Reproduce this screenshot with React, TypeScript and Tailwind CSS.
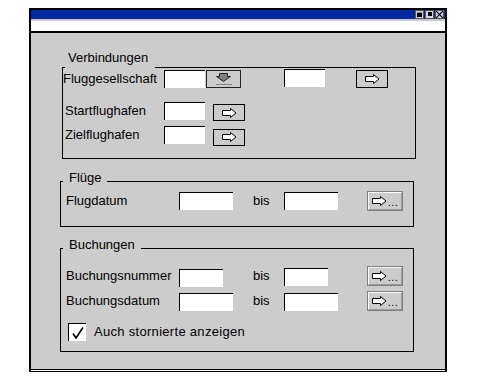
import React from "react";

function HollowArrow() {
  return (
    <svg width="15" height="10" viewBox="0 0 15 10">
      <path
        d="M0.5 2.5H8.5V0.5L14 5L8.5 9.5V7.5H0.5Z"
        fill="white"
        stroke="black"
      />
    </svg>
  );
}

function ArrowButton({ w = "w-[32px]", h = "h-[18px]" }: { w?: string; h?: string }) {
  return (
    <div
      className={`${w} ${h} shrink-0 flex items-center justify-center border border-black bg-[#cccccc]`}
    >
      <HollowArrow />
    </div>
  );
}

function MoreButton() {
  return (
    <div className="w-[36px] h-[20px] shrink-0 flex border border-[#808080] bg-[#cccccc]">
      <div className="flex-1 flex items-center justify-center gap-[1px] border-t border-l border-white border-r border-b border-r-[#999999] border-b-[#999999]">
        <HollowArrow />
        <span className="text-[11px] leading-none mt-[3px] tracking-[0.5px]">...</span>
      </div>
    </div>
  );
}

function DropButton() {
  return (
    <div className="w-[35px] h-[18px] shrink-0 flex items-center justify-center border border-[#222222] bg-[#cccccc]">
      <svg width="18" height="14" viewBox="0 0 18 14">
        <path d="M4.5 1.5H12.5V4.5H15.5L8.5 9.5L1.5 4.5H4.5Z" fill="#808080" stroke="#222222" />
        <rect x="1" y="12" width="16" height="1" fill="#808080" />
      </svg>
    </div>
  );
}

function Field({ w }: { w: string }) {
  return <div className={`${w} h-[18px] shrink-0 bg-white border-t border-l border-black`} />;
}

function GroupHeader({ label, gap }: { label: string; gap: string }) {
  return (
    <div className="flex h-[16px]">
      <div className="w-[3px] mt-[11px] border-l border-t border-black" />
      <div className={`${gap} pl-[6px] whitespace-nowrap leading-[16px]`}>{label}</div>
      <div className="flex-1 mt-[11px] border-t border-r border-black" />
    </div>
  );
}

export default function App() {
  return (
    <div className="min-h-[382px] bg-white pt-[8px] pl-[29px] font-['Liberation_Sans',Arial,sans-serif] text-[13px] text-black">
      <div className="w-[418px] border-l-2 border-r-2 border-t-2 border-black">
        {/* title bar */}
        <div className="h-[9px] bg-[#0029a3] flex justify-end items-start pr-[1px]">
          <div className="flex gap-[1px] h-[9px]">
            <div className="w-[9px] h-[9px] bg-[#d4d4d4] border border-[#555555] flex items-end justify-center pb-[1px]">
              <div className="w-[5px] h-[5px] bg-black border-t border-[#888888]" />
            </div>
            <div className="w-[9px] h-[9px] bg-[#d4d4d4] border border-[#555555] flex justify-end pt-[1px] pr-[1px]">
              <div className="w-[4px] h-[4px] bg-black" />
            </div>
            <div className="w-[9px] h-[9px] bg-[#d4d4d4] border border-[#555555] flex items-center justify-center">
              <svg width="7" height="7" viewBox="0 0 7 7">
                <path d="M0 0L7 7M7 0L0 7" stroke="black" strokeWidth="1.2" />
              </svg>
            </div>
          </div>
        </div>
        <div className="h-[2px] bg-[#c8c8c8]" />
        <div className="h-[10px] bg-white border-b-2 border-black box-content" />

        {/* body */}
        <div className="h-[336px] bg-[#cccccc] pl-[29px]">
          {/* Verbindungen */}
          <div className="ml-[2px] w-[354px] pt-[16px]">
            <div className="h-[18px] pl-[6px] leading-[18px]">Verbindungen</div>
            <div className="flex h-[1px]">
              <div className="w-[3px] border-t border-black" />
              <div className="w-[90px]" />
              <div className="flex-1 border-t border-black" />
            </div>
            <div className="border-l border-r border-b border-black pt-[1px] pb-[13px]">
              <div className="flex items-center h-[20px]">
                <div className="w-[101px] shrink-0 whitespace-nowrap">Fluggesellschaft</div>
                <Field w="w-[41px]" />
                <div className="ml-[1px]">
                  <DropButton />
                </div>
                <div className="ml-[43px] mb-[2px]">
                  <Field w="w-[41px]" />
                </div>
                <div className="ml-[31px]">
                  <ArrowButton />
                </div>
              </div>
              <div className="flex items-center h-[20px] mt-[12px]">
                <div className="w-[101px] shrink-0 pl-[2px] whitespace-nowrap">Startflughafen</div>
                <Field w="w-[41px]" />
                <div className="ml-[8px] mt-[3px]">
                  <ArrowButton h="h-[17px]" />
                </div>
              </div>
              <div className="flex items-center h-[20px] mt-[4px]">
                <div className="w-[101px] shrink-0 pl-[2px] whitespace-nowrap">Zielflughafen</div>
                <Field w="w-[41px]" />
                <div className="ml-[8px] mt-[4px]">
                  <ArrowButton h="h-[17px]" />
                </div>
              </div>
            </div>
          </div>

          {/* Flüge */}
          <div className="w-[354px] mt-[11px]">
            <GroupHeader label="Flüge" gap="w-[44px]" />
            <div className="border-l border-r border-b border-black pl-[5px] pt-[5px] pb-[15px]">
              <div className="flex items-center h-[20px]">
                <div className="w-[113px] shrink-0">Flugdatum</div>
                <Field w="w-[54px]" />
                <div className="ml-[20px] w-[31px] shrink-0">bis</div>
                <div className="mb-[1px]">
                  <Field w="w-[54px]" />
                </div>
                <div className="ml-[29px]">
                  <MoreButton />
                </div>
              </div>
            </div>
          </div>

          {/* Buchungen */}
          <div className="w-[354px] mt-[10px]">
            <GroupHeader label="Buchungen" gap="w-[78px]" />
            <div className="border-l border-r border-b border-black pl-[5px] pt-[13px] pb-[10px]">
              <div className="flex items-center h-[20px]">
                <div className="w-[113px] shrink-0 whitespace-nowrap">Buchungsnummer</div>
                <div className="mt-[3px]">
                  <Field w="w-[44px]" />
                </div>
                <div className="ml-[30px] w-[31px] shrink-0">bis</div>
                <div className="mt-[2px]">
                  <Field w="w-[44px]" />
                </div>
                <div className="ml-[39px]">
                  <MoreButton />
                </div>
              </div>
              <div className="flex items-center h-[20px] mt-[5px]">
                <div className="w-[113px] shrink-0 whitespace-nowrap">Buchungsdatum</div>
                <div className="mt-[2px]">
                  <Field w="w-[54px]" />
                </div>
                <div className="ml-[20px] w-[31px] shrink-0">bis</div>
                <div className="mt-[1px]">
                  <Field w="w-[54px]" />
                </div>
                <div className="ml-[29px]">
                  <MoreButton />
                </div>
              </div>
              <div className="flex items-center h-[18px] mt-[12px] pl-[2px]">
                <div className="w-[18px] h-[18px] shrink-0 bg-white border-t border-l border-black flex items-center justify-center">
                  <svg width="14" height="14" viewBox="0 0 14 14">
                    <path d="M2 7.5L5 12L12 1.5" fill="none" stroke="black" strokeWidth="1.6" />
                  </svg>
                </div>
                <div className="ml-[8px] tracking-[0.3px]">Auch stornierte anzeigen</div>
              </div>
            </div>
          </div>
        </div>

        {/* bottom double line */}
        <div className="h-[1px] bg-black" />
        <div className="h-[1px] bg-white" />
        <div className="h-[1px] bg-black" />
      </div>
    </div>
  );
}
